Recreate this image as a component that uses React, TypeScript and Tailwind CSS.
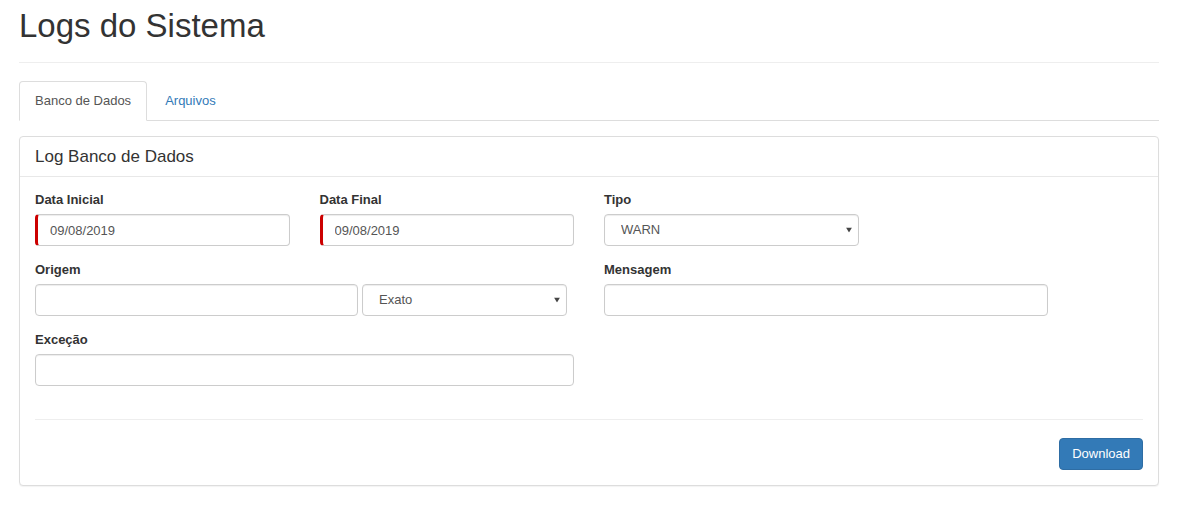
import React from 'react'

const font = { fontFamily: '"Liberation Sans", Arial, sans-serif' }

function Caret() {
  return (
    <svg
      className="pointer-events-none absolute right-[7px] top-1/2 -translate-y-1/2"
      width="6"
      height="5"
      viewBox="0 0 6 5"
    >
      <path d="M0 0h6L3 5z" fill="#444" />
    </svg>
  )
}

function Label({ children }: { children: React.ReactNode }) {
  return <label className="mb-[5px] block text-[13px] font-bold leading-[18px] text-[#333]">{children}</label>
}

const baseCls =
  'block h-[32px] rounded-[4px] border border-[#ccc] bg-white px-[12px] text-[13px] text-[#555] shadow-[inset_0_1px_1px_rgba(0,0,0,0.075)] outline-none'
const inputCls = `${baseCls} w-full`

function DateInput({ value }: { value: string }) {
  return (
    <input
      className={`${inputCls} border-l-[3px] border-l-[#cc0000]`}
      defaultValue={value}
      style={font}
    />
  )
}

function Select({ value, width }: { value: string; width?: string }) {
  return (
    <div className={`relative ${width ?? 'w-full'}`}>
      <select
        className={`${inputCls} appearance-none pl-[16px]`}
        defaultValue={value}
        style={font}
      >
        <option>{value}</option>
      </select>
      <Caret />
    </div>
  )
}

export default function App() {
  return (
    <div className="min-h-[509px] bg-white text-[13px] text-[#333]" style={font}>
      <div className="ml-[19px] w-[1140px] pt-[8px]">
        <h1 className="h-[36px] text-[33px] leading-[36px] font-normal text-[#333]">Logs do Sistema</h1>
        <hr className="mt-[18px] border-0 border-t border-[#eee]" />

        <ul className="mt-[18px] flex border-b border-[#ddd]">
          <li className="-mb-px mr-[2px]">
            <a className="block h-[40px] rounded-t-[4px] border border-[#ddd] border-b-transparent bg-white px-[15px] leading-[38px] text-[#555]">
              Banco de Dados
            </a>
          </li>
          <li className="-mb-px mr-[2px]">
            <a className="block h-[40px] rounded-t-[4px] border border-transparent px-[15px] leading-[38px] text-[#337ab7]">
              Arquivos
            </a>
          </li>
        </ul>

        <div className="mt-[15px] rounded-[4px] border border-[#ddd] bg-white shadow-[0_1px_1px_rgba(0,0,0,0.05)]">
          <div className="flex h-[40px] items-center border-b border-[#e8e8e8] px-[15px] text-[17px] text-[#333]">
            Log Banco de Dados
          </div>
          <div className="px-[15px] pt-[14px] pb-[15px]">
            <div className="grid grid-cols-12 gap-x-[30px]">
              <div className="col-span-3 mb-[15px]">
                <Label>Data Inicial</Label>
                <DateInput value="09/08/2019" />
              </div>
              <div className="col-span-3 mb-[15px]">
                <Label>Data Final</Label>
                <DateInput value="09/08/2019" />
              </div>
              <div className="col-span-3 mb-[15px]">
                <Label>Tipo</Label>
                <Select value="WARN" />
              </div>
            </div>

            <div className="grid grid-cols-12 gap-x-[30px]">
              <div className="col-span-6 mb-[15px]">
                <Label>Origem</Label>
                <div className="flex gap-[4px]">
                  <input className={`${baseCls} w-[323px]`} style={font} />
                  <Select value="Exato" width="w-[205px]" />
                </div>
              </div>
              <div className="col-span-5 mb-[15px]">
                <Label>Mensagem</Label>
                <input className={inputCls} style={font} />
              </div>
            </div>

            <div className="grid grid-cols-12 gap-x-[30px]">
              <div className="col-span-6 mb-[15px]">
                <Label>Exceção</Label>
                <input className={inputCls} style={font} />
              </div>
            </div>

            <hr className="mt-[18px] border-0 border-t border-[#eee]" />

            <div className="mt-[18px] flex justify-end">
              <button
                className="h-[32px] rounded-[4px] border border-[#2e6da4] bg-[#337ab7] px-[12px] text-[13px] text-white"
                style={font}
              >
                Download
              </button>
            </div>
          </div>
        </div>
      </div>
    </div>
  )
}
